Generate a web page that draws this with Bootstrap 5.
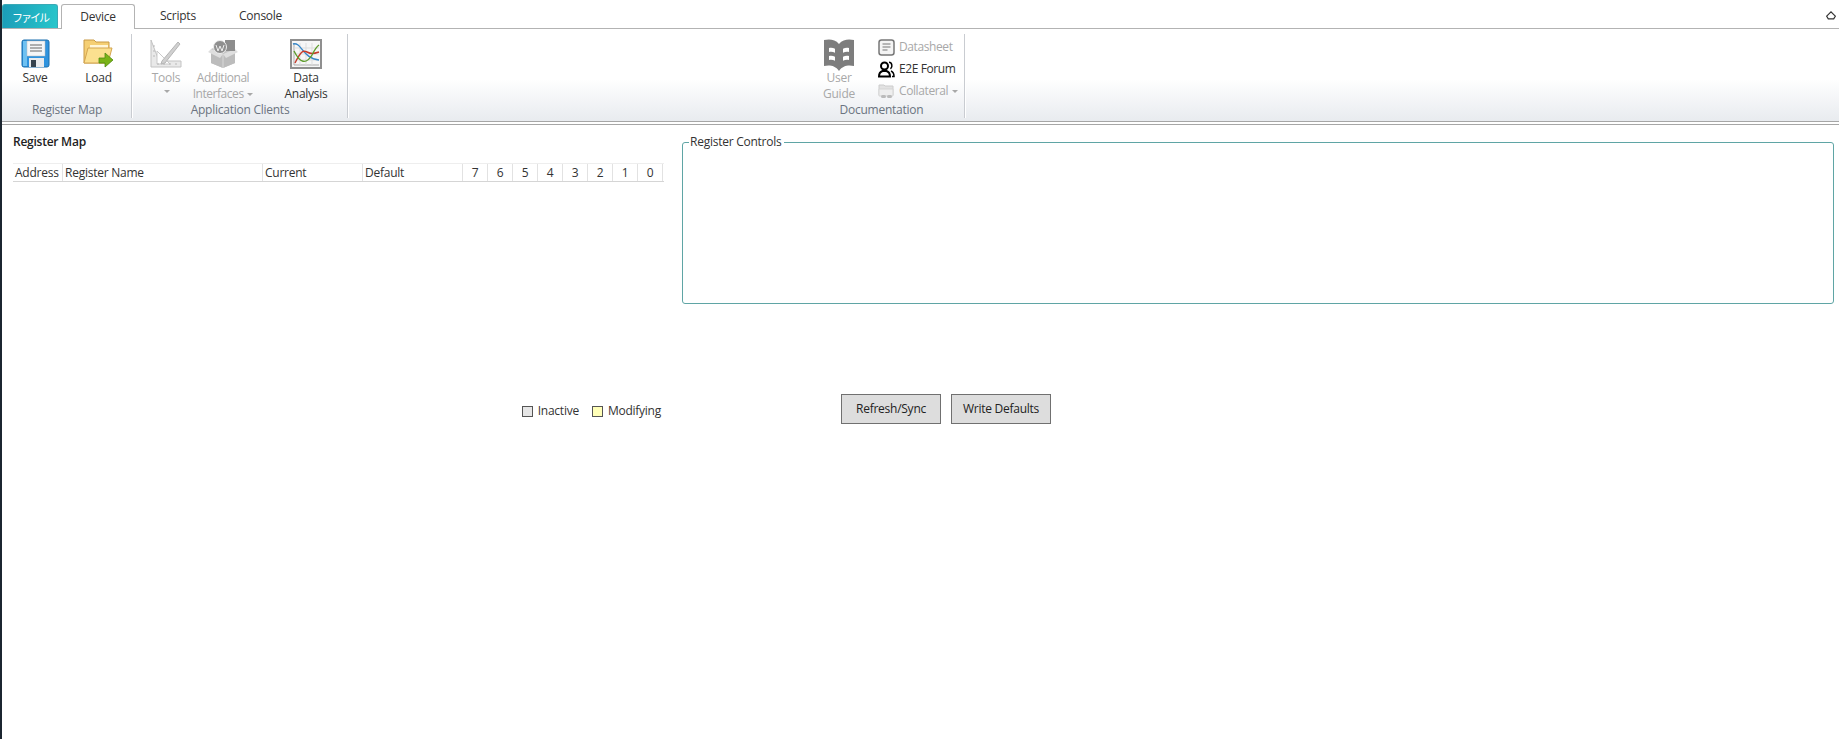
<!doctype html>
<html lang="en">
<head>
<meta charset="utf-8">
<title>Register Map</title>
<link rel="stylesheet" href="https://cdn.jsdelivr.net/npm/bootstrap@5.3.0/dist/css/bootstrap.min.css">
<style>
html,body{height:100%}
body{background:#fff;border-left:2px solid #1b2530;font:12px/16px "Open Sans","Noto Sans",sans-serif;color:#333;overflow:hidden;letter-spacing:-.25px}
.tabstrip{height:29px;border-bottom:1px solid #b3b3b3;padding-top:4px;position:relative}
.filetab{width:56px;height:24px;background:linear-gradient(100deg,#1b9cb8,#28c6cb);border:1px solid #3aa9b5;border-bottom:0;border-radius:3px 3px 0 0;color:#fff;font-family:"Noto Sans CJK JP",sans-serif;font-size:11px;line-height:24px;text-align:center;letter-spacing:-2px}
.rtab{height:25px;line-height:23px;text-align:center;color:#333}
.rtab-on{width:74px;margin-left:3px;background:#fff;border:1px solid #b3b3b3;border-bottom:0;border-radius:3px 3px 0 0}
.rtab-a{margin-left:25px;width:35px}
.rtab-b{margin-left:44px;width:42px}
.collapse-ic{position:absolute;right:3px;top:11px}
.ribbon{height:93px;background:linear-gradient(#fff 0,#fff 50px,#e8ebef 100%);border-bottom:1px solid #a6a6a6}
.rgroup{height:93px;position:relative;flex:none}
.rgroup::after{content:"";position:absolute;right:0;top:5px;bottom:4px;width:1px;background:#c9ccd1;box-shadow:1px 0 0 #fff}
.g1{width:130px}
.g2{width:216px}
.g3{width:167px;margin-left:450px}
.glabel{position:absolute;left:0;right:0;top:73px;text-align:center;color:#6b7480;line-height:16px}
.bigbtn{flex:none;height:73px;padding-top:10px;text-align:center;display:flex;flex-direction:column;align-items:center;line-height:16px}
.bigbtn svg{display:block;height:30px;margin-bottom:1px;flex:none}
.off{color:#a8a8a8}
.w-save{width:64px;margin-left:1px}
.w-load{width:63px}
.w-tools{width:48px;margin-left:10px}
.w-add{width:66px;letter-spacing:-.45px}
.w-data{width:84px;margin-left:8px}
.w-guide{width:62px;margin-left:10px;padding-top:9px}
.w-guide svg{height:34px;margin-bottom:-2px}
.smallcol{margin-left:8px;padding-top:7px;letter-spacing:-.4px}
.smallbtn{display:flex;align-items:center;height:22px;gap:4px;white-space:nowrap}
.caret-s{display:inline-block;border:3px solid transparent;border-top-color:currentColor;border-bottom:0;vertical-align:middle;margin-left:1px}
.sub-rule{height:3px;border-bottom:1px solid #a6a6a6}
.main-left{width:680px;flex:none;padding:9px 0 0 11px}
.maptitle{font-weight:600;color:#222;line-height:16px;margin-bottom:13px}
.gridhead{width:651px;height:19px;border-top:1px solid #eee;border-bottom:1px solid #d5d5d5}
.hc{height:17px;line-height:17px;padding-left:2px;border-right:1px solid #e2e2e2;flex:none}
.c-a{width:50px}.c-n{width:200px}.c-c{width:100px}.c-d{width:100px}
.c-b{width:25px;padding:0;text-align:center}
.legendrow{margin-top:221px;padding-right:21px;height:16px}
.swatch{width:11px;height:11px;border:1px solid #555;margin-right:5px;flex:none}
.sw-i{background:#e6e6e6}.sw-m{background:#ffffb8}
.gap-leg{margin-right:13px}
.main-right{flex:1;padding-top:7px;padding-right:5px}
.regbox{height:169px;border:1px solid #5fa5a5;border-radius:3px;padding:0 6px;margin:3px 0 0;display:block}
.regbox legend{float:none;width:auto;font-size:12px;line-height:14px;padding:0 3px 0 1px;margin:-8px 0 0;color:#333;background:#fff;letter-spacing:-.25px}
.actions{margin:90px 0 0 159px;gap:10px}
.actbtn{width:100px;height:30px;padding:0;background:#dddddd;border:1px solid #707070;border-radius:0;font-size:12px;color:#222;line-height:26px;letter-spacing:-.25px}
.actbtn:hover{background:#dddddd;border-color:#707070;color:#222}
</style>
</head>
<body>
<div class="tabstrip d-flex">
  <div class="filetab">ファイル</div>
  <div class="rtab rtab-on">Device</div>
  <div class="rtab rtab-a">Scripts</div>
  <div class="rtab rtab-b">Console</div>
  <svg class="collapse-ic" width="10" height="9" viewBox="0 0 10 9"><path d="M.7 5.200 5 .9l4.300 4.300-1.600 2.600H2.300z" fill="none" stroke="#333" stroke-width="1.200"/></svg>
</div>
<div class="ribbon d-flex">
  <div class="rgroup g1 d-flex">
    <div class="bigbtn w-save">
      <svg width="30" height="30" viewBox="0 0 30 30"><rect x="2" y="1" width="27" height="27" rx="2" fill="#2f93de" stroke="#1a6fae"/><rect x="3" y="2" width="4" height="25" fill="#6ec1f2"/><rect x="7" y="2" width="18" height="15" fill="#f4f6f8" stroke="#bbb" stroke-width=".5"/><path d="M10 6h12M10 9h12M10 12h12" stroke="#666"/><rect x="9" y="19" width="15" height="9" fill="#e8ebee"/><rect x="11" y="21" width="5" height="7" fill="#35434f"/></svg>
      <span>Save</span>
    </div>
    <div class="bigbtn w-load">
      <svg width="31" height="30" viewBox="0 0 31 30"><path d="M1 1h10l2 2h13v21H1z" fill="#f5cf74" stroke="#c89a47"/><path d="M7 6h18v3H7z" fill="#fff6d8"/><path d="M1 24 5 9h24l-4 15z" fill="#fbe08f" stroke="#d4a550"/><path d="M16 19h6v-5l8 7-8 7v-4h-6z" fill="#7ab317" stroke="#4e8a10" stroke-width=".8"/></svg>
      <span>Load</span>
    </div>
    <div class="glabel">Register Map</div>
  </div>
  <div class="rgroup g2 d-flex">
    <div class="bigbtn w-tools off">
      <svg width="32" height="30" viewBox="0 0 32 30"><path d="M1 1v27h30v-6H9z" fill="#e9e9e9" stroke="#c3c3c3"/><path d="M7 12v13h13z" fill="#fff" stroke="#c9c9c9"/><path d="M12 22 28 3l2 2-15 19-4 1z" fill="#d0d0d0" stroke="#b5b5b5"/><path d="M3 7h2M3 12h2M3 17h2M8 26v-2M14 26v-2M20 26v-2M26 26v-2" stroke="#b8b8b8"/></svg>
      <span>Tools</span>
      <span class="caret-s mt-1"></span>
    </div>
    <div class="bigbtn w-add off">
      <svg width="30" height="30" viewBox="0 0 30 30"><path d="M3 10 15 5l12 5v14l-12 5-12-5z" fill="#c4c4c4"/><path d="M3 10 15 15l12-5v14l-12 5-12-5z" fill="#bcbcbc"/><path d="M15 15v14" stroke="#d8d8d8"/><path d="M0 13 3 10l12 5-3 4zM30 13l-3-3-12 5 3 4z" fill="#dedede"/><rect x="17" y="1" width="10" height="11" fill="#8d8d8d"/><circle cx="12" cy="8" r="6.500" fill="#8f8f8f" stroke="#eee"/><path d="M8 6l2 6 2-5 2 5 2-6" fill="none" stroke="#eee"/></svg>
      <span>Additional</span>
      <span>Interfaces <span class="caret-s"></span></span>
    </div>
    <div class="bigbtn w-data">
      <svg width="32" height="30" viewBox="0 0 32 30"><rect x="1" y="1" width="30" height="28" fill="#f6f6f6" stroke="#8f8f8f" stroke-width="2"/><path d="M4 4v22h25" fill="none" stroke="#aaa"/><path d="M4 9h25M4 15h25M4 21h25M10 4v22M16 4v22M22 4v22" stroke="#ddd"/><path d="M3 5c8-3 10 15 26 16" fill="none" stroke="#3787c8" stroke-width="1.400"/><path d="M5 24c6-12 8-13 12-11s6 2 12 0" fill="none" stroke="#c53a2a" stroke-width="1.400"/><path d="M4 12c6 12 12 14 18 4 2-4 4-8 7-10" fill="none" stroke="#5d9c2a" stroke-width="1.400"/></svg>
      <span>Data</span>
      <span>Analysis</span>
    </div>
    <div class="glabel">Application Clients</div>
  </div>
  <div class="rgroup g3 d-flex">
    <div class="bigbtn w-guide off">
      <svg width="32" height="34" viewBox="0 0 32 34"><path d="M16 6C12 1 6 1 1 2v26c5-1 11-1 15 5 4-6 10-6 15-5V2c-5-1-11-1-15 4z" fill="#7d7d7d"/><path d="M6 10c2-.5 4-.3 6 .7v4c-2-1-4-1.200-6-.7zM26 10c-2-.5-4-.3-6 .7v4c2-1 4-1.200 6-.7zM6 18c2-.5 4-.3 6 .7v4c-2-1-4-1.200-6-.7zM26 18c-2-.5-4-.3-6 .7v4c2-1 4-1.200 6-.7z" fill="#fff"/></svg>
      <span>User</span>
      <span>Guide</span>
    </div>
    <div class="smallcol">
      <div class="smallbtn off">
        <svg width="17" height="17" viewBox="0 0 17 17"><rect x="1" y="1" width="15" height="15" rx="2.500" fill="#f4f4f4" stroke="#777" stroke-width="1.500"/><path d="M4.500 5h8M4.500 8h8M4.500 11h5" stroke="#777"/></svg>
        <span>Datasheet</span>
      </div>
      <div class="smallbtn">
        <svg width="17" height="17" viewBox="0 0 17 17"><circle cx="6.500" cy="5" r="3.500" fill="none" stroke="#000" stroke-width="2"/><path d="M1 15.500c0-3 2-5 3.500-5.500h4c1.500.5 3.500 2.500 3.500 5.500z" fill="none" stroke="#000" stroke-width="2"/><path d="M11 1.300c3 0 4 4.500 1.500 6.500M13 10c2 .8 3 2.500 3 5.500h-2" fill="none" stroke="#000" stroke-width="1.500"/></svg>
        <span>E2E Forum</span>
      </div>
      <div class="smallbtn off">
        <svg width="17" height="17" viewBox="0 0 17 17"><path d="M1 2h5l1 1h8v9H1z" fill="#e2e2e2" stroke="#ccc"/><path d="M1 6h14v7H1z" fill="#eeeeee" stroke="#d5d5d5"/><rect x="3" y="12" width="5" height="3" rx="1.500" fill="#bbb"/><rect x="9" y="12" width="5" height="3" rx="1.500" fill="#bbb"/></svg>
        <span>Collateral <span class="caret-s"></span></span>
      </div>
    </div>
    <div class="glabel">Documentation</div>
  </div>
</div>
<div class="sub-rule"></div>
<div class="d-flex">
  <div class="main-left">
    <div class="maptitle">Register Map</div>
    <div class="gridhead d-flex">
      <div class="hc c-a">Address</div>
      <div class="hc c-n">Register Name</div>
      <div class="hc c-c">Current</div>
      <div class="hc c-d">Default</div>
      <div class="hc c-b">7</div><div class="hc c-b">6</div><div class="hc c-b">5</div><div class="hc c-b">4</div><div class="hc c-b">3</div><div class="hc c-b">2</div><div class="hc c-b">1</div><div class="hc c-b">0</div>
    </div>
    <div class="legendrow d-flex justify-content-end align-items-center">
      <span class="swatch sw-i"></span><span class="gap-leg">Inactive</span>
      <span class="swatch sw-m"></span><span>Modifying</span>
    </div>
  </div>
  <div class="main-right">
    <fieldset class="regbox"><legend>Register Controls</legend></fieldset>
    <div class="actions d-flex">
      <button type="button" class="btn actbtn">Refresh/Sync</button>
      <button type="button" class="btn actbtn">Write Defaults</button>
    </div>
  </div>
</div>
</body>
</html>
